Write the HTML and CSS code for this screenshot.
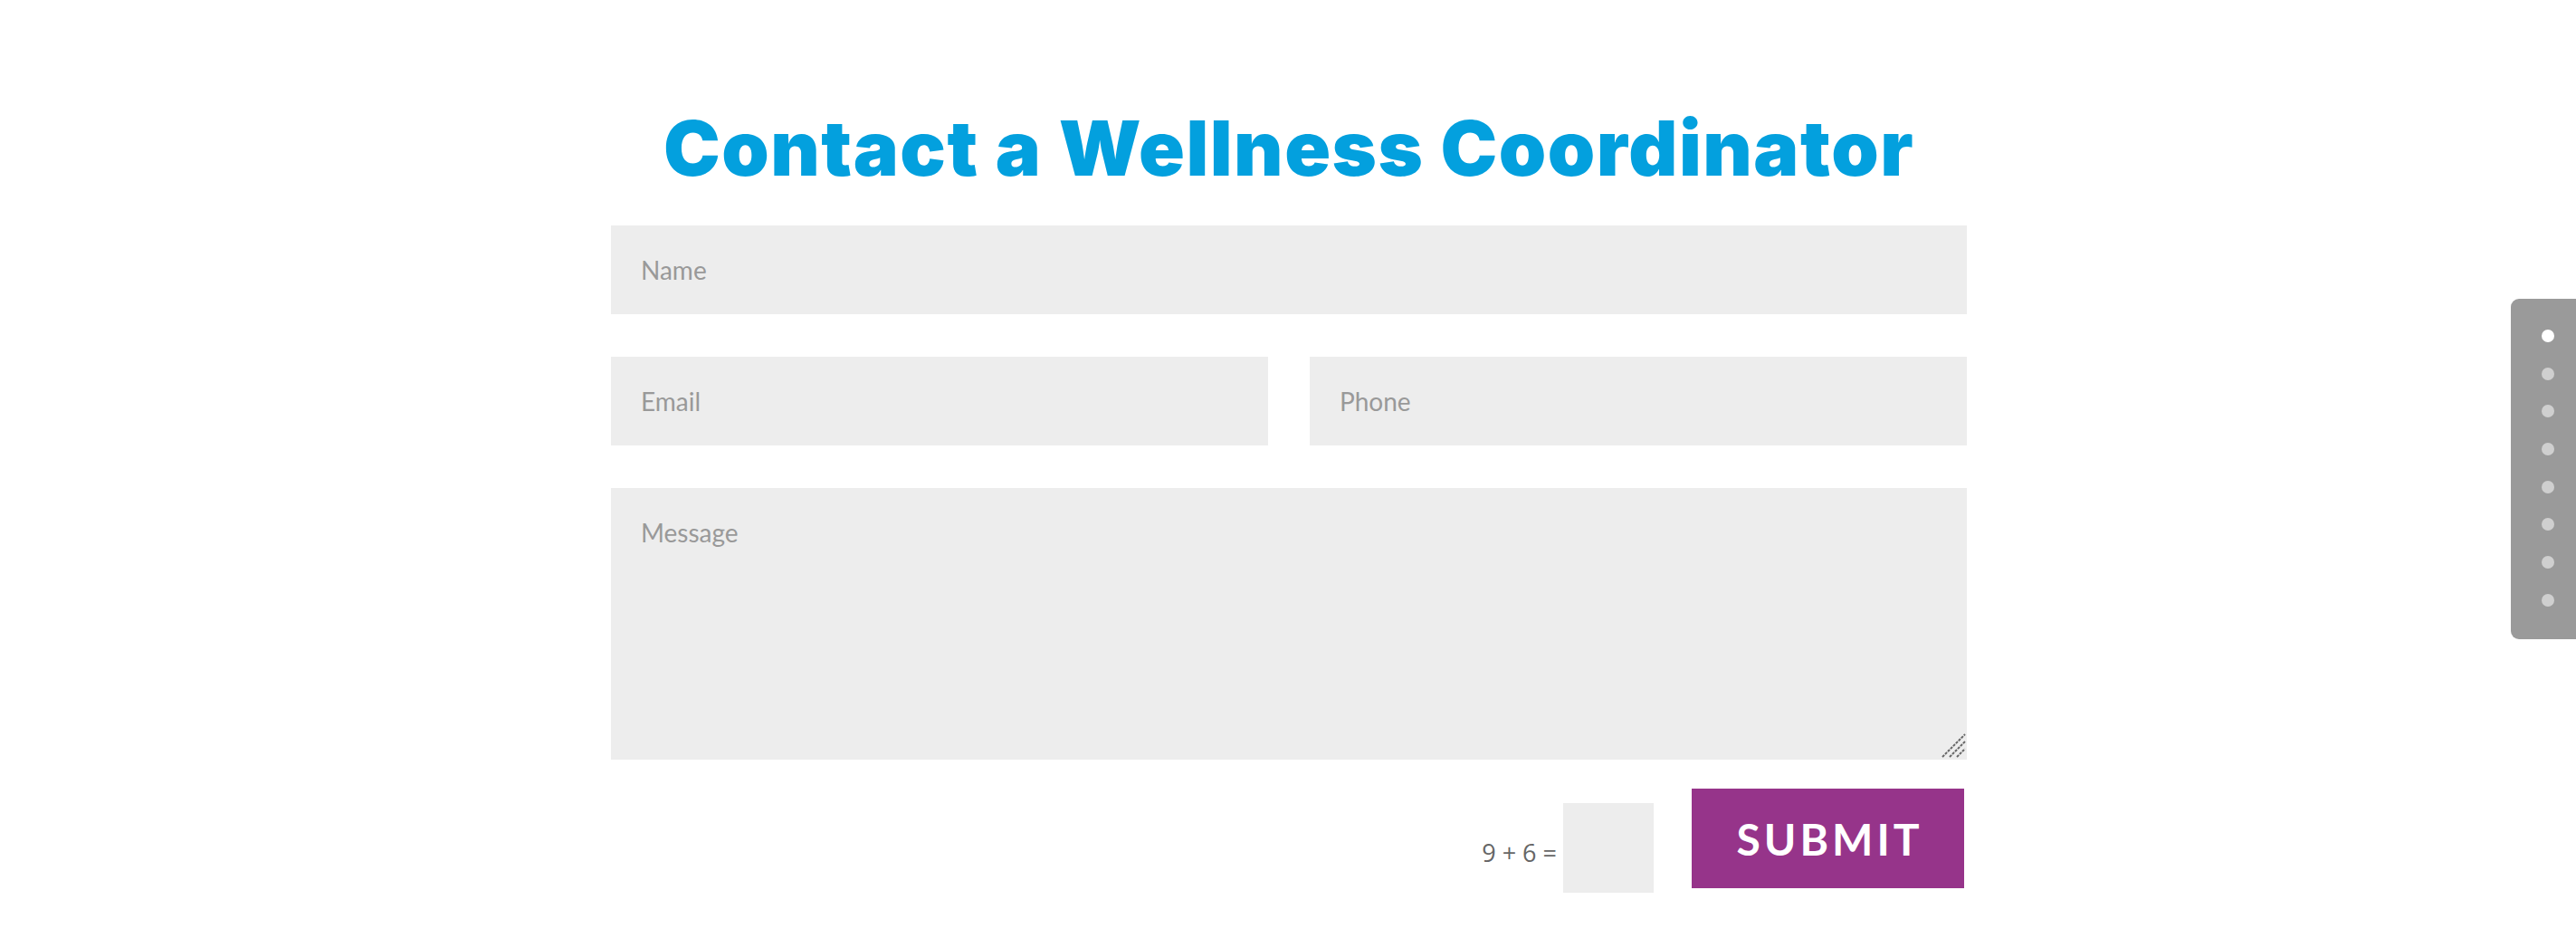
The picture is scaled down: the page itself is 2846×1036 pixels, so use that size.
FILE: index.html
```html
<!DOCTYPE html>
<html lang="en">
<head>
<meta charset="utf-8">
<title>Contact a Wellness Coordinator</title>
<link rel="stylesheet" href="styles.css">
</head>
<body>
<main class="section">
  <h1 class="title">Contact a Wellness Coordinator</h1>
  <form class="form">
    <div class="field"><input class="input" type="text" placeholder="Name"></div>
    <div class="row">
      <div class="field"><input class="input" type="text" placeholder="Email"></div>
      <div class="field"><input class="input" type="text" placeholder="Phone"></div>
    </div>
    <div class="field field-message">
      <textarea class="input textarea" placeholder="Message"></textarea>
      <svg class="grip" width="27" height="27" viewBox="0 0 27 27" aria-hidden="true">
        <path d="M1 26 L26 1 M9 26 L26 9 M17 26 L26 17" stroke="#666" stroke-width="2" stroke-dasharray="3 1.2" fill="none"/>
      </svg>
    </div>
    <div class="actions">
      <div class="captcha">
        <span class="captcha-q">9 + 6 =</span>
        <input class="captcha-input" type="text">
      </div>
      <button class="submit" type="button">Submit</button>
    </div>
  </form>
</main>
<nav class="dots">
  <span class="dot active"></span>
  <span class="dot"></span>
  <span class="dot"></span>
  <span class="dot"></span>
  <span class="dot"></span>
  <span class="dot"></span>
  <span class="dot"></span>
  <span class="dot"></span>
</nav>
</body>
</html>
```
FILE: styles.css
```css
html, body {
  margin: 0;
  padding: 0;
  background: #fff;
}
body {
  font-family: "Lato", "Liberation Sans", sans-serif;
}
.section {
  width: 1498px;
  margin: 0 auto;
  padding-top: 116px;
  position: relative;
  left: 1px;
}
.title {
  margin: 0;
  text-align: center;
  font-family: "Inter", "Lato", sans-serif;
  font-weight: 900;
  font-size: 84px;
  line-height: 96px;
  color: #03a0de;
  letter-spacing: 1.5px;
}
.form {
  margin-top: 37px;
  display: flex;
  flex-direction: column;
  gap: 47px;
}
.row {
  display: flex;
  gap: 46px;
}
.row .field {
  flex: 1;
}
.field-message {
  position: relative;
}
.input {
  display: block;
  width: 100%;
  box-sizing: border-box;
  height: 98px;
  border: 0;
  outline: 0;
  background: #ededed;
  padding: 0 33px;
  font-family: "Lato", sans-serif;
  font-weight: 400;
  font-size: 28px;
  color: #999;
}
.input::placeholder {
  color: #999;
}
.textarea {
  height: 300px;
  padding-top: 32px;
  resize: none;
}
.grip {
  position: absolute;
  right: 1px;
  bottom: 2px;
}
.actions {
  display: flex;
  justify-content: flex-end;
  align-items: flex-start;
  gap: 42px;
  margin-top: -15px;
  padding-right: 3px;
  padding-bottom: 40px;
}
.captcha {
  display: flex;
  align-items: center;
  gap: 7px;
  margin-top: 16px;
}
.captcha-q {
  font-family: "Open Sans", sans-serif;
  font-size: 27px;
  color: #666;
  margin-top: 10px;
}
.captcha-input {
  width: 100px;
  height: 99px;
  box-sizing: border-box;
  border: 0;
  background: #ededed;
}
.submit {
  width: 301px;
  height: 110px;
  border: 0;
  background: #96348a;
  color: #fff;
  font-family: "Lato", sans-serif;
  font-weight: 700;
  font-size: 48px;
  letter-spacing: 4px;
  text-indent: 4px;
  text-transform: uppercase;
  padding: 0;
}
.dots {
  position: fixed;
  right: 0;
  top: 330px;
  width: 72px;
  height: 376px;
  box-sizing: border-box;
  background: #9a9a9a;
  border-radius: 9px 0 0 9px;
  display: flex;
  flex-direction: column;
  align-items: center;
  padding-top: 34px;
  gap: 27.7px;
}
.dot {
  width: 14px;
  height: 14px;
  border-radius: 50%;
  background: #cfcfcf;
  margin-left: 10px;
}
.dot.active {
  background: #fff;
}
```
